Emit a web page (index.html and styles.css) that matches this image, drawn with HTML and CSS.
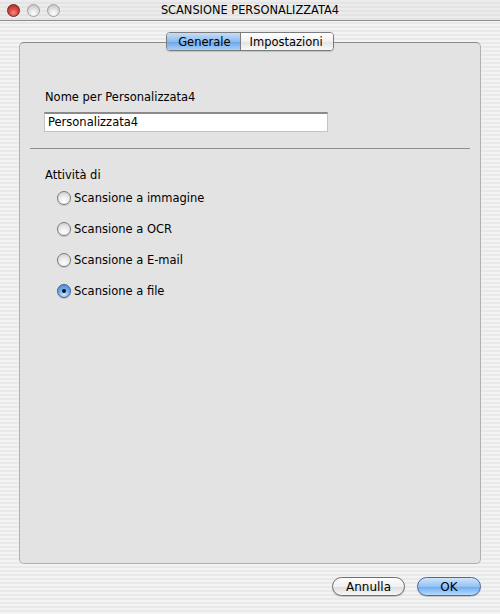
FILE: index.html
```html
<!DOCTYPE html>
<html>
<head>
<meta charset="utf-8">
<link rel="stylesheet" href="styles.css">
</head>
<body>
<div class="window">
  <div class="titlebar">
    <div class="lights">
      <span class="light red"></span>
      <span class="light gray"></span>
      <span class="light gray"></span>
    </div>
    <div class="title">SCANSIONE PERSONALIZZATA4</div>
    <div></div>
  </div>
  <div class="content">
    <div class="panel">
      <div class="tabs">
        <span class="tab selected">Generale</span>
        <span class="tab">Impostazioni</span>
      </div>
      <div class="label">Nome per Personalizzata4</div>
      <div class="input">Personalizzata4</div>
      <div class="sep"></div>
      <div class="label2">Attività di</div>
      <div class="radios">
        <div class="radio-row"><span class="radio"></span><span>Scansione a immagine</span></div>
        <div class="radio-row"><span class="radio"></span><span>Scansione a OCR</span></div>
        <div class="radio-row"><span class="radio"></span><span>Scansione a E-mail</span></div>
        <div class="radio-row"><span class="radio checked"></span><span>Scansione a file</span></div>
      </div>
    </div>
    <div class="buttons">
      <span class="btn">Annulla</span>
      <span class="btn default">OK</span>
    </div>
  </div>
</div>
</body>
</html>
```
FILE: styles.css
```css
html, body { margin: 0; padding: 0; }
body { width: 500px; height: 614px; overflow: hidden; }
.window {
  width: 500px; height: 614px;
  background: repeating-linear-gradient(to bottom, #f3f3f3 0 2px, #e9e9e9 2px 4px);
  font-family: "DejaVu Sans", "Liberation Sans", sans-serif;
  font-size: 11.5px; color: #000;
  display: flex; flex-direction: column;
}
.titlebar {
  height: 20px;
  border-bottom: 1px solid #8e8e8e;
  background: repeating-linear-gradient(to bottom, #ececec 0 2px, #e3e3e3 2px 4px);
  display: grid; grid-template-columns: 1fr auto 1fr; align-items: center;
}
.lights { display: flex; gap: 7px; padding-left: 7px; align-items: center; }
.light {
  width: 13px; height: 13px; border-radius: 50%;
  border: 1px solid #8a8a8a; box-sizing: border-box;
}
.light.red {
  background: radial-gradient(circle at 50% 70%, #f08a82 0, #d9473d 45%, #a3241c 100%);
  border-color: #5c2a28;
}
.light.gray {
  background: radial-gradient(circle at 50% 75%, #ffffff 0, #e2e2e2 45%, #b8b8b8 100%);
  border-color: #a0a0a0;
}
.title { font-size: 11.4px; }
.content { padding: 0 19px; display: flex; flex-direction: column; }
.panel {
  margin-top: 21px; height: 522px; box-sizing: border-box;
  border: 1px solid #b0b0b0; border-top-color: #8c8c8c;
  border-radius: 5px;
  background: #e3e3e3;
  padding: 0 25px;
  display: flex; flex-direction: column; align-items: flex-start;
}
.tabs {
  align-self: center; margin-top: -11px;
  display: flex; height: 19px;
  border: 1px solid #7c7c7c; border-radius: 4px; box-sizing: border-box;
  overflow: hidden; box-shadow: 0 1px 1px rgba(0,0,0,0.15);
}
.tab {
  display: flex; align-items: center; padding: 0 10px 0 9px;
  background: linear-gradient(#ffffff, #f1f1f1 50%, #e2e2e2 51%, #f9f9f9);
}
.tab.selected {
  background: linear-gradient(#c6ddf6, #8dbbf0 50%, #6aa4ea 51%, #a7d0fb);
  border-right: 1px solid #7c7c7c;
  padding: 0 9px 0 11px;
}
.label { margin-top: 39px; line-height: 15px; }
.input {
  margin-top: 7px; margin-left: -1px;
  width: 284px; height: 20px; box-sizing: border-box;
  background: #fff;
  border: 1px solid #c4c4c4; border-top: 2px solid #8a8a8a;
  padding: 1px 3px; line-height: 15px;
}
.sep {
  margin: 16px -15px 0; height: 1px; background: #8e8e8e;
  align-self: stretch;
}
.label2 { margin-top: 19px; line-height: 15px; }
.radios { margin-top: 7px; display: flex; flex-direction: column; gap: 15px; margin-left: 12px; }
.radio-row { display: flex; align-items: center; gap: 3px; height: 16px; }
.radio {
  width: 14px; height: 14px; border-radius: 50%; box-sizing: border-box;
  border: 1px solid #7a7a7a;
  background: radial-gradient(circle at 50% 80%, #ffffff 0, #f0f0f0 40%, #c8c8c8 100%);
  box-shadow: 0 1px 1px rgba(0,0,0,0.15);
  display: flex; align-items: center; justify-content: center;
}
.radio.checked {
  border-color: #3d5f8f;
  background: radial-gradient(circle at 50% 80%, #c9e6ff 0, #78b1ef 45%, #3f7ed3 100%);
}
.radio.checked::after {
  content: ""; width: 4px; height: 4px; border-radius: 50%; background: #111;
}
.buttons {
  margin-top: 13px; display: flex; justify-content: flex-end; gap: 12px;
}
.btn {
  height: 19px; box-sizing: border-box; border-radius: 10px;
  border: 1px solid #6f6f6f;
  background: linear-gradient(#fdfdfd, #f0f0f0 50%, #dcdcdc 51%, #f7f7f7);
  display: flex; align-items: center; justify-content: center;
  width: 73px; font-size: 12px;
  box-shadow: 0 1px 1px rgba(0,0,0,0.2);
}
.btn.default {
  width: 64px;
  border-color: #4a6a99;
  background: linear-gradient(#cfe5fb, #94c3f3 50%, #6aaaf0 51%, #b6dbff);
}
```
